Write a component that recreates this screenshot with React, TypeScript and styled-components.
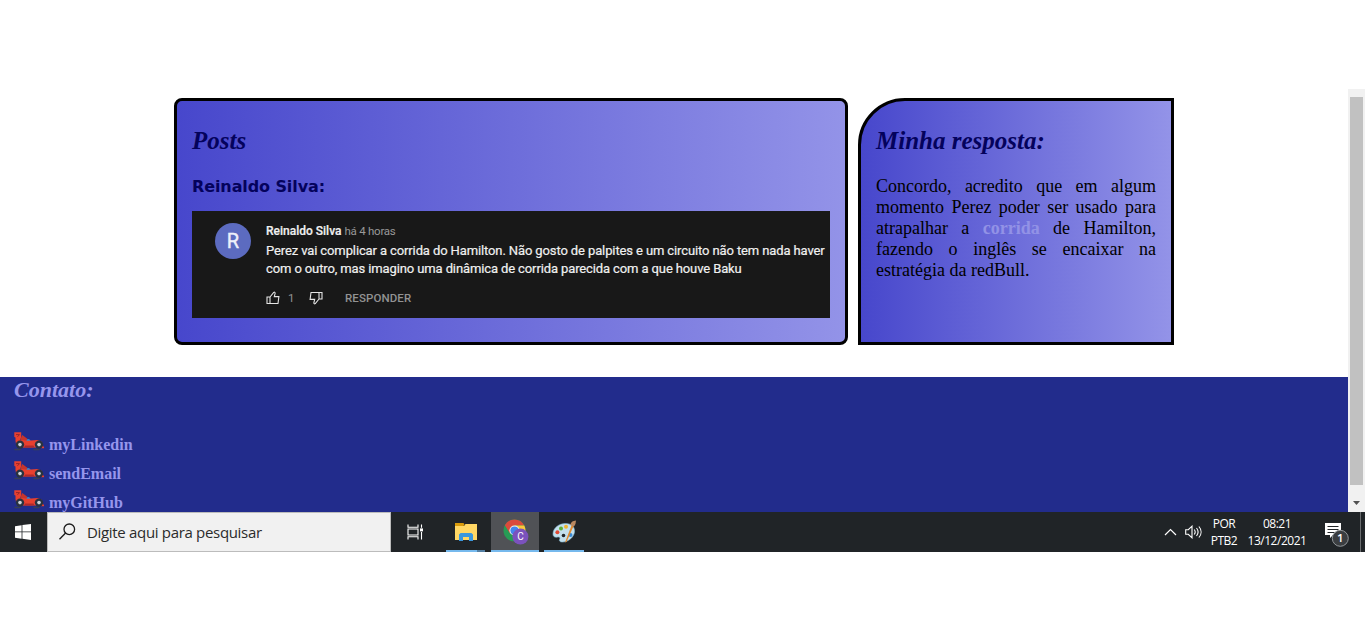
import React from "react";
import styled, { createGlobalStyle } from "styled-components";

const GlobalStyle = createGlobalStyle`
  * { box-sizing: border-box; }
  body { margin: 0; background: #fff; overflow: hidden; font-family: "Liberation Serif", "Times New Roman", serif; }
  h2, h3, p, ul { margin: 0; padding: 0; }
`;

const Screen = styled.div`
  width: 1365px;
  height: 624px;
  padding-top: 90px;
  background: #fff;
  overflow: hidden;
`;

const Viewport = styled.div`
  display: flex;
  height: 422px;
`;

const Page = styled.div`
  width: 1348px;
  height: 422px;
  display: flex;
  flex-direction: column;
  overflow: hidden;
`;

const Main = styled.main`
  display: flex;
  flex: 0 0 287px;
  gap: 10px;
  align-items: flex-start;
  padding: 8px 0 0 174px;
`;

const Card = styled.section<{ $width: number; $radius: string }>`
  width: ${(p) => p.$width}px;
  height: 247px;
  padding: 25px 15px 0;
  border: 3px solid #000;
  border-radius: ${(p) => p.$radius};
  background: linear-gradient(to right, #4747cc, #9393e8);
`;

const Title = styled.h2`
  font-size: 25px;
  line-height: 29px;
  font-style: italic;
  font-weight: bold;
  color: #04025c;
`;

const Author = styled.h3`
  margin-top: 21px;
  font: bold 16px/22px "DejaVu Sans", Verdana, sans-serif;
  letter-spacing: -0.1px;
  color: #04025c;
`;

const Comment = styled.div`
  display: flex;
  width: 638px;
  height: 107px;
  margin-top: 13px;
  padding: 12px 0 0 23px;
  gap: 15px;
  background: #181818;
  font-family: Roboto, sans-serif;
`;

const Avatar = styled.div`
  width: 36px;
  height: 36px;
  flex: none;
  border-radius: 50%;
  background: #5c6bc0;
  color: #eef0fa;
  font-size: 20px;
  line-height: 37px;
  text-align: center;
  -webkit-text-stroke: 0.4px #eef0fa;
`;

const CommentBody = styled.div`
  color: #f0f0f0;
  white-space: nowrap;
`;

const Byline = styled.div`
  margin-bottom: 3px;
  font-size: 12px;
  line-height: 16px;
  font-weight: 500;
  -webkit-text-stroke: 0.2px #f0f0f0;
`;

const When = styled.span`
  margin-left: 3px;
  font-weight: 400;
  font-size: 11.5px;
  letter-spacing: -0.25px;
  color: #999;
  -webkit-text-stroke: 0;
`;

const CommentLine = styled.div`
  font-size: 13px;
  line-height: 18px;
  letter-spacing: -0.115px;
  -webkit-text-stroke: 0.2px #f0f0f0;
`;

const Actions = styled.div`
  display: flex;
  align-items: center;
  height: 16px;
  margin-top: 12px;
  font-size: 11.5px;
  color: #929292;
`;

const Likes = styled.span`
  width: 21px;
  margin-left: 8px;
`;

const Reply = styled.span`
  margin-left: 22px;
  font-weight: 500;
  letter-spacing: 0.1px;
`;

const Answer = styled.p`
  margin-top: 21px;
  font-size: 18px;
  line-height: 21px;
  text-align: justify;
  color: #000;
`;

const Highlight = styled.strong`
  color: #9292e6;
`;

const Footer = styled.footer`
  flex: 1;
  padding-left: 14px;
  background: #222c8c;
  color: #9696ec;
`;

const FooterTitle = styled.h2`
  font-size: 22px;
  line-height: 26px;
  font-style: italic;
`;

const Links = styled.ul`
  margin-top: 25px;
  list-style: none;
`;

const LinkItem = styled.li`
  display: flex;
  height: 29px;
  gap: 5px;
  font-size: 16px;
  font-weight: bold;
  line-height: 34px;

  svg { margin-top: 4px; }
`;

const Scrollbar = styled.div`
  display: flex;
  flex-direction: column;
  align-items: center;
  width: 17px;
  height: 423px;
  margin-top: -1px;
  padding-top: 8px;
  background: #f1f1f1;
`;

const Thumb = styled.div`
  width: 13px;
  height: 388px;
  margin-bottom: 16px;
  background: #c1c1c1;
`;

const Taskbar = styled.div`
  display: flex;
  height: 40px;
  background: #202427;
  color: #fff;
  font-family: "Open Sans", "Segoe UI", sans-serif;
`;

const StartButton = styled.div`
  display: flex;
  align-items: center;
  justify-content: center;
  width: 47px;
  padding-right: 1px;
`;

const SearchBox = styled.div`
  display: flex;
  align-items: center;
  width: 344px;
  padding-left: 11px;
  gap: 10px;
  border: 1px solid #bcbcbc;
  background: #f1f1f1;
  color: #2b2b2b;
  font-size: 15px;
  letter-spacing: -0.32px;
`;

const TaskButton = styled.div<{ $width: number; $gap?: number; $shift?: number; $open?: boolean; $active?: boolean }>`
  display: flex;
  align-items: center;
  justify-content: center;
  width: ${(p) => p.$width}px;
  margin-left: ${(p) => p.$gap ?? 0}px;
  padding-left: ${(p) => p.$shift ?? 0}px;
  padding-top: ${(p) => (p.$open ? 2 : 0)}px;
  background: ${(p) => (p.$active ? "#505256" : "transparent")};
  border-bottom: ${(p) => (p.$open ? "2px solid #76b9ed" : "none")};
`;

const StackedEdge = styled.div`
  width: 8px;
  border-bottom: 2px solid #537fa3;
`;

const Tray = styled.div`
  display: flex;
  align-items: center;
  margin-left: auto;
`;

const Chevron = styled.svg`
  margin-right: 8px;
`;

const TrayText = styled.div<{ $width: number; $gap: number; $spacing: number }>`
  width: ${(p) => p.$width}px;
  margin-left: ${(p) => p.$gap}px;
  padding-bottom: 1px;
  font-size: 12px;
  line-height: 17px;
  letter-spacing: ${(p) => p.$spacing}px;
  text-align: center;
  white-space: nowrap;
`;

const Notifications = styled.div`
  display: flex;
  width: 26px;
  margin: 6px 0 0 17px;
`;

const DesktopEdge = styled.div`
  width: 5px;
  height: 40px;
  margin-left: 10px;
  border-left: 1px solid #6a6d6f;
`;

const Thumbs = ({ down }: { down?: boolean }) => (
  <svg width="14" height="14" viewBox="0 0 14 14" fill="none" stroke="#e4e4e4" strokeWidth="1.1" transform={down ? "rotate(180)" : undefined}>
    <path d="M1 6h3v6.5H1zM4 6l3.7-4.6c.9-.6 1.6.1 1.4 1L8.3 5.6h4.6L12 12.5H4z" />
  </svg>
);

const RaceCar = () => (
  <svg width="30" height="20" viewBox="0 0 30 20">
    <path d="M.5 17.600h6M19.500 17.600h6" stroke="#394052" strokeWidth="1.500" />
    <path d="M.3.3h6.900v4.500L6 9H1.500V5.500L.3 5z" fill="#e8402f" />
    <path d="M2 2.600h3.500L3.500 4.800" stroke="#97262b" fill="none" />
    <path d="M6.500 7l1.800-4L13 6.500l1.500 4-7-1z" fill="#c6352d" />
    <path d="M12.500 9c0-3 3.300-2.600 4.200 0z" fill="#3189d6" />
    <path d="M1.500 9l6-1 6 .8 10-.8 4 1.500 2 5.500-6 .5H8L2 12z" fill="#e8402f" />
    <path d="M10 15.500h10.500l-1-2H11z" fill="#af2a2b" />
    <path d="M27 15.500h3" stroke="#e8402f" strokeWidth="1.400" />
    <circle cx="6" cy="12.600" r="4.200" fill="#293340" />
    <circle cx="25" cy="12.600" r="4.200" fill="#293340" />
    <circle cx="6" cy="12.600" r="1.800" fill="#ccd2d8" />
    <circle cx="25" cy="12.600" r="1.800" fill="#ccd2d8" />
  </svg>
);

const WindowsLogo = () => (
  <svg width="16" height="16" viewBox="0 0 16 16" fill="#fff">
    <path d="M0 2.2L6.6 1.2v6.3H0zM7.4 1.1L16 0v7.5H7.4zM0 8.3h6.6v6.4L0 13.8zM7.4 8.3H16V16l-8.6-1.2z" />
  </svg>
);

const SearchIcon = () => (
  <svg width="18" height="18" viewBox="0 0 18 18" fill="none" stroke="#1b1b1b" strokeWidth="1.3">
    <circle cx="10.300" cy="6.300" r="5.300" />
    <path d="M6.600 10L.5 16.300" />
  </svg>
);

const TaskView = () => (
  <svg width="17" height="16" viewBox="0 0 17 16" fill="none" stroke="#fff" strokeWidth="1.1">
    <path d="M1 .5v2.800h10V.5M1 15.500v-2.800h10v2.800M1 5h10v6H1zM14.500.5v3.300M14.500 8v7.500" />
    <path d="M13 4.400h3v3h-3z" fill="#fff" stroke="none" />
  </svg>
);

const FolderIcon = () => (
  <svg width="22" height="18" viewBox="0 0 22 18">
    <path d="M0 3h9l1.5-2H22v16H0z" fill="#ffd764" />
    <path d="M0 0h8.500l1 1.600-1 1.400H0z" fill="#d99b0b" />
    <path d="M4 18v-6.500l1.600-1.500h10.800l1.600 1.500V18h-4v-4H8v4z" fill="#3a97dd" />
  </svg>
);

const ChromeIcon = () => (
  <svg width="26" height="26" viewBox="0 0 26 26">
    <circle cx="11.500" cy="11.500" r="11" fill="#279b55" />
    <path d="M1.800 6.300A11 11 0 0 1 21.300 6.500H11.500L6.700 14z" fill="#db4a3c" />
    <path d="M11.500 6.500h9.800a11 11 0 0 1-9.400 16l4.400-8.300z" fill="#f9c83a" />
    <circle cx="11.500" cy="11.500" r="5.100" fill="#f4f4f4" />
    <circle cx="11.500" cy="11.500" r="4.100" fill="#4386ee" />
    <circle cx="17.400" cy="17.600" r="8" fill="#7b52bd" />
    <text x="17.400" y="21" fontSize="10" fontFamily="Roboto, sans-serif" fill="#fff" textAnchor="middle">C</text>
  </svg>
);

const PaintIcon = () => (
  <svg width="25" height="24" viewBox="0 0 25 24">
    <path d="M1 14C1 8 7 3.500 13.500 3.500S23 7.500 22.500 12 17 22 10.500 22c-3 0-3.600-1.400-2.700-3 .7-1.300-.3-2.400-2-2C3.500 17.700 1 17 1 14z" fill="#c3e0ee" stroke="#83b8d2" strokeWidth=".6" />
    <circle cx="5.400" cy="12.200" r="2" fill="#e14a35" />
    <circle cx="9" cy="8.500" r="2" fill="#5eae35" />
    <circle cx="14" cy="6.700" r="2" fill="#efb52f" />
    <circle cx="11.500" cy="15.500" r="1.800" fill="#202427" />
    <circle cx="18.500" cy="15" r="2" fill="#3889d5" />
    <path d="M13 22.500L19.500 5.500l2 .8L14.500 22z" fill="#e28b30" />
    <path d="M18.500 5.200c0-3 2.500-4.500 5.500-4.700-.3 2-.2 4.500-2.300 6z" fill="#b98860" />
  </svg>
);

const SpeakerIcon = () => (
  <svg width="18" height="14" viewBox="0 0 18 14" fill="none" stroke="#fff" strokeWidth="1.1">
    <path d="M.7 4.700h2.600L7 1.200v11.600L3.300 9.300H.7zM9.200 4.500c1.200 1.500 1.200 3.500 0 5M11.500 3c2 2.500 2 5.500 0 8M13.900 1.500c2.900 3.300 2.900 7.700 0 11" />
  </svg>
);

const NotificationIcon = () => (
  <svg width="26" height="26" viewBox="0 0 26 26">
    <path d="M1 1h16v12H9l-3 3v-3H1z" fill="#fff" />
    <path d="M3.500 4.500h11M3.500 7.500h11M3.500 10.500h7" stroke="#202427" />
    <circle cx="16.300" cy="16.300" r="8" fill="#3b3e41" stroke="#92979a" />
    <text x="16.300" y="20.300" fontSize="11.500" fontWeight="600" fontFamily="Open Sans, sans-serif" fill="#fff" textAnchor="middle">1</text>
  </svg>
);

export default function App() {
  return (
    <Screen>
      <GlobalStyle />
      <Viewport>
        <Page>
          <Main>
            <Card $width={674} $radius="8px">
              <Title>Posts</Title>
              <Author>Reinaldo Silva:</Author>
              <Comment>
                <Avatar>R</Avatar>
                <CommentBody>
                  <Byline>Reinaldo Silva<When>há 4 horas</When></Byline>
                  <CommentLine>Perez vai complicar a corrida do Hamilton. Não gosto de palpites e um circuito não tem nada haver</CommentLine>
                  <CommentLine>com o outro, mas imagino uma dinâmica de corrida parecida com a que houve Baku</CommentLine>
                  <Actions>
                    <Thumbs />
                    <Likes>1</Likes>
                    <Thumbs down />
                    <Reply>RESPONDER</Reply>
                  </Actions>
                </CommentBody>
              </Comment>
            </Card>
            <Card $width={316} $radius="47px 0 0 0">
              <Title>Minha resposta:</Title>
              <Answer>
                Concordo, acredito que em algum momento Perez poder ser usado para atrapalhar a <Highlight>corrida</Highlight> de
                Hamilton, fazendo o inglês se encaixar na estratégia da redBull.
              </Answer>
            </Card>
          </Main>
          <Footer>
            <FooterTitle>Contato:</FooterTitle>
            <Links>
              {["myLinkedin", "sendEmail", "myGitHub"].map((name) => (
                <LinkItem key={name}><RaceCar />{name}</LinkItem>
              ))}
            </Links>
          </Footer>
        </Page>
        <Scrollbar>
          <Thumb />
          <svg width="7" height="4" viewBox="0 0 7 4"><path d="M0 0h7L3.500 4z" fill="#505050" /></svg>
        </Scrollbar>
      </Viewport>
      <Taskbar>
        <StartButton><WindowsLogo /></StartButton>
        <SearchBox><SearchIcon />Digite aqui para pesquisar</SearchBox>
        <TaskButton $width={48}><TaskView /></TaskButton>
        <TaskButton $width={31} $gap={7} $shift={8} $open><FolderIcon /></TaskButton>
        <StackedEdge />
        <TaskButton $width={48} $gap={6} $shift={2} $open $active><ChromeIcon /></TaskButton>
        <TaskButton $width={40} $gap={5} $open><PaintIcon /></TaskButton>
        <Tray>
          <Chevron width="13" height="8" viewBox="0 0 13 8" fill="none" stroke="#fff" strokeWidth="1.200"><path d="M1 7l5.500-5.500L12 7" /></Chevron>
          <SpeakerIcon />
          <TrayText $width={28} $gap={7} $spacing={-0.5}>POR<br />PTB2</TrayText>
          <TrayText $width={60} $gap={9} $spacing={-0.48}>08:21<br />13/12/2021</TrayText>
          <Notifications><NotificationIcon /></Notifications>
          <DesktopEdge />
        </Tray>
      </Taskbar>
    </Screen>
  );
}
